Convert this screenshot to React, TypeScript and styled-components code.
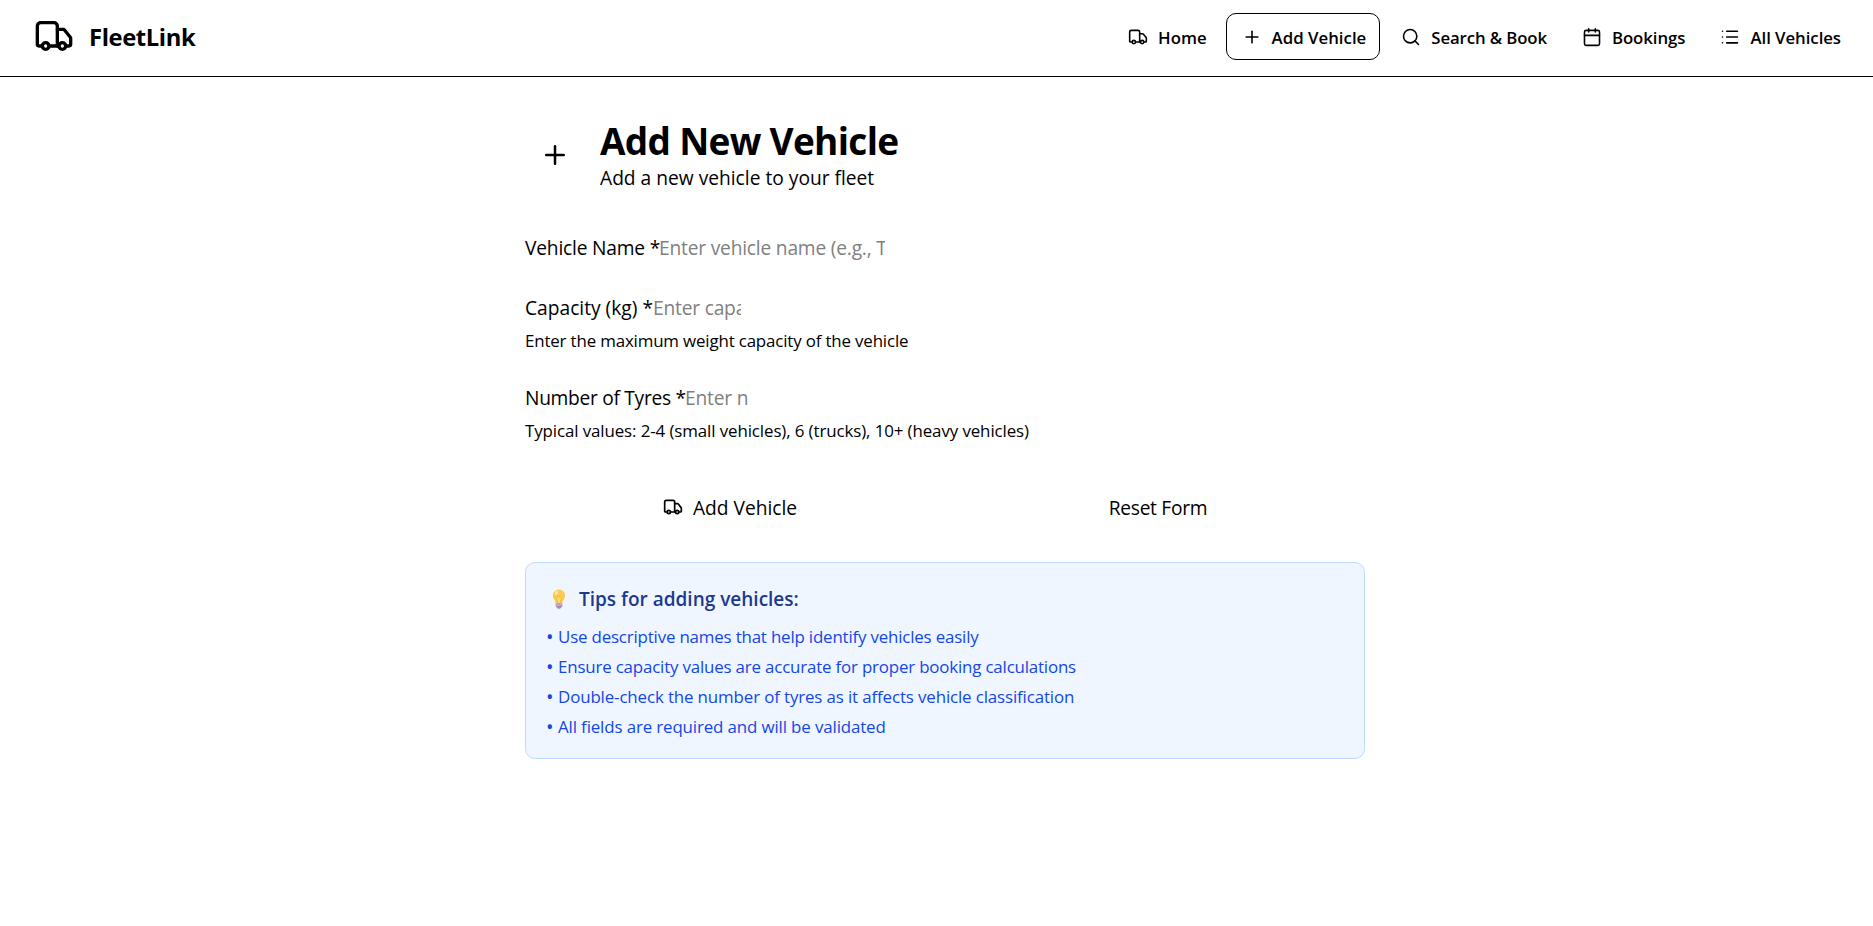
import React from 'react';
import styled, { createGlobalStyle } from 'styled-components';
import { Truck, Plus, Search, Calendar, List } from 'lucide-react';

const GlobalStyle = createGlobalStyle`
  *, *::before, *::after { box-sizing: border-box; }
  body {
    margin: 0;
    background: #fff;
    color: #000;
    font-family: "Segoe UI", "Open Sans", "Noto Sans", sans-serif;
    font-size: 19.2px;
    line-height: 30px;
  }
  h1, h3, p, ul { margin: 0; padding: 0; }
  ul { list-style: none; }
  svg { display: block; flex-shrink: 0; }
`;

const Header = styled.header`
  display: flex;
  align-items: flex-start;
  justify-content: space-between;
  height: 77px;
  padding: 13px 18px 0 34px;
  border-bottom: 1px solid #000;
`;

const Brand = styled.div`
  display: flex;
  align-items: center;
  gap: 15px;
  padding-top: 3px;
`;

const BrandName = styled.span`
  padding-top: 3px;
  font-size: 23.8px;
  font-weight: 700;
  line-height: 35px;
  letter-spacing: -0.4px;
`;

const Nav = styled.nav`
  display: flex;
  gap: 5px;
`;

const NavItem = styled.a<{ $active?: boolean }>`
  display: flex;
  align-items: center;
  gap: 10px;
  height: 47px;
  padding: 0 13px 0 15px;
  border: 1px solid ${(p) => (p.$active ? '#000' : 'transparent')};
  border-radius: 10px;
  white-space: nowrap;
`;

const NavLabel = styled.span<{ $track: number }>`
  padding-top: 2px;
  font-size: 16.8px;
  font-weight: 600;
  line-height: 25px;
  letter-spacing: ${(p) => p.$track}px;
`;

const Main = styled.main`
  width: 840px;
  margin: 0 0 0 525px;
  padding-top: 41px;
`;

const PageHeading = styled.div`
  display: flex;
  align-items: center;
  gap: 15px;
  margin-bottom: 40px;
`;

const HeadingIcon = styled.div`
  display: flex;
  justify-content: center;
  width: 60px;
  padding-bottom: 2px;
`;

const Title = styled.h1`
  padding-top: 1px;
  font-size: 37px;
  font-weight: 700;
  line-height: 44px;
  letter-spacing: -0.7px;
`;

const Form = styled.form`
  display: flex;
  flex-direction: column;
  gap: 30px;
`;

const FieldRow = styled.div`
  display: flex;
  height: 30px;
`;

const Label = styled.label<{ $width: number; $track: number }>`
  width: ${(p) => p.$width}px;
  white-space: nowrap;
  letter-spacing: ${(p) => p.$track}px;
`;

const Input = styled.input<{ $width: number }>`
  width: ${(p) => p.$width}px;
  height: 30px;
  padding: 0;
  border: 0;
  outline: 0;
  background: transparent;
  font: inherit;
  letter-spacing: -0.2px;
  &::placeholder { color: #808080; opacity: 1; }
`;

const Help = styled.p<{ $track?: number }>`
  margin-top: 5px;
  font-size: 16.9px;
  line-height: 25px;
  letter-spacing: ${(p) => p.$track ?? 0}px;
`;

const Actions = styled.div`
  display: grid;
  grid-template-columns: 410px 414px;
  gap: 16px;
  margin-top: 20px;
`;

const Button = styled.button<{ $track: number }>`
  display: flex;
  align-items: center;
  justify-content: center;
  gap: 10px;
  height: 30px;
  padding: 0;
  border: 0;
  background: none;
  color: inherit;
  font: inherit;
  letter-spacing: ${(p) => p.$track}px;
`;

const ButtonIcon = styled.span`
  padding-bottom: 2px;
`;

const Tips = styled.section`
  height: 197px;
  margin-top: 39px;
  padding: 21px 20px 20px;
  border: 1px solid #bedbff;
  border-radius: 10px;
  background: #eff6ff;
`;

const TipsTitle = styled.h3`
  display: flex;
  align-items: center;
  gap: 13px;
  padding-left: 6px;
  margin-bottom: 10px;
  font-size: 19px;
  font-weight: 600;
  line-height: 30px;
  color: #1c398e;
`;

const BulbIcon = styled.svg`
  margin-bottom: 1px;
`;

const TipsList = styled.ul`
  display: flex;
  flex-direction: column;
  gap: 5px;
`;

const Tip = styled.li<{ $track: number }>`
  display: flex;
  font-size: 16.9px;
  line-height: 25px;
  color: #1447e6;
  letter-spacing: ${(p) => p.$track}px;
`;

const Bullet = styled.span`
  width: 12px;
  font-size: 20px;
`;

const Bulb = () => (
  <BulbIcon width="14" height="20" viewBox="0 0 14 20">
    <path d="M7 .4a6.200 6.200 0 0 0-6.200 6.200c0 3.100 2.500 4.600 2.900 8.200h6.600c.4-3.600 2.900-5.100 2.900-8.200A6.200 6.200 0 0 0 7 .4z" fill="#fccb4f" />
    <path d="M4.600 8.200l1.300 6h2.200l1.300-6c-.8-1.200-2-1-2.400.2-.4-1.200-1.600-1.400-2.400-.2z" fill="#fbdc7c" stroke="#f3ad3c" strokeWidth=".7" />
    <ellipse cx="4.600" cy="4" rx="1.500" ry="2" transform="rotate(35 4.600 4)" fill="#ffe9a8" />
    <path d="M3.700 14.600h6.600v2.600c0 .7-.6 1-1.200 1.200-.3.900-1 1.300-2.100 1.300s-1.800-.4-2.100-1.300c-.6-.2-1.200-.5-1.200-1.200z" fill="#a48fb0" />
    <path d="M3.700 16.400l6.600-.7" stroke="#dccfe2" strokeWidth=".8" />
  </BulbIcon>
);

const navItems = [
  { label: 'Home', icon: Truck, track: 0 },
  { label: 'Add Vehicle', icon: Plus, track: 0.02, active: true },
  { label: 'Search & Book', icon: Search, track: -0.12 },
  { label: 'Bookings', icon: Calendar, track: -0.05 },
  { label: 'All Vehicles', icon: List, track: -0.05 },
];

const fields = [
  {
    label: 'Vehicle Name *', placeholder: 'Enter vehicle name (e.g., Truck-001)',
    labelWidth: 134, inputWidth: 226, track: -0.2,
  },
  {
    label: 'Capacity (kg) *', placeholder: 'Enter capacity in kg',
    labelWidth: 128, inputWidth: 88, track: 0,
    help: 'Enter the maximum weight capacity of the vehicle', helpTrack: -0.16,
  },
  {
    label: 'Number of Tyres *', placeholder: 'Enter number of tyres',
    labelWidth: 160, inputWidth: 63, track: -0.3,
    help: 'Typical values: 2-4 (small vehicles), 6 (trucks), 10+ (heavy vehicles)', helpTrack: -0.1,
  },
];

const tips = [
  { text: 'Use descriptive names that help identify vehicles easily', track: -0.18 },
  { text: 'Ensure capacity values are accurate for proper booking calculations', track: -0.18 },
  { text: 'Double-check the number of tyres as it affects vehicle classification', track: -0.13 },
  { text: 'All fields are required and will be validated', track: -0.13 },
];

export default function App() {
  return (
    <>
      <GlobalStyle />
      <Header>
        <Brand>
          <Truck size={40} />
          <BrandName>FleetLink</BrandName>
        </Brand>
        <Nav>
          {navItems.map(({ label, icon: Icon, track, active }) => (
            <NavItem key={label} $active={active}>
              <Icon size={20} strokeWidth={1.9} />
              <NavLabel $track={track}>{label}</NavLabel>
            </NavItem>
          ))}
        </Nav>
      </Header>
      <Main>
        <PageHeading>
          <HeadingIcon><Plus size={30} /></HeadingIcon>
          <div>
            <Title>Add New Vehicle</Title>
            <p>Add a new vehicle to your fleet</p>
          </div>
        </PageHeading>
        <Form>
          {fields.map((f) => (
            <div key={f.label}>
              <FieldRow>
                <Label $width={f.labelWidth} $track={f.track}>{f.label}</Label>
                <Input $width={f.inputWidth} placeholder={f.placeholder} />
              </FieldRow>
              {f.help && <Help $track={f.helpTrack}>{f.help}</Help>}
            </div>
          ))}
          <Actions>
            <Button type="button" $track={0}>
              <ButtonIcon><Truck size={20} /></ButtonIcon>
              Add Vehicle
            </Button>
            <Button type="button" $track={-0.3}>Reset Form</Button>
          </Actions>
        </Form>
        <Tips>
          <TipsTitle><Bulb />Tips for adding vehicles:</TipsTitle>
          <TipsList>
            {tips.map((t) => (
              <Tip key={t.text} $track={t.track}><Bullet>•</Bullet>{t.text}</Tip>
            ))}
          </TipsList>
        </Tips>
      </Main>
    </>
  );
}
